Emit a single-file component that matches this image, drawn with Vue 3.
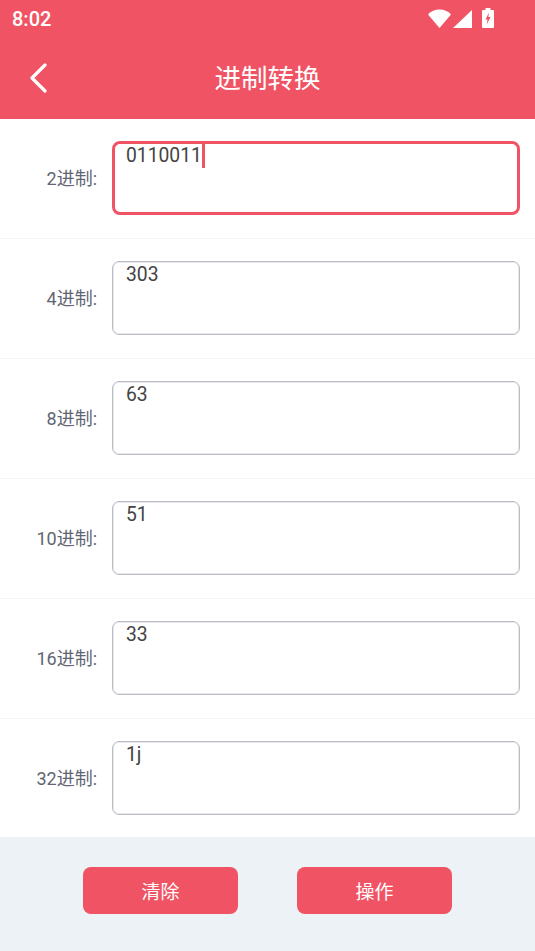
<script setup>
const rows = [
  { label: '2进制:', value: '0110011', active: true },
  { label: '4进制:', value: '303' },
  { label: '8进制:', value: '63' },
  { label: '10进制:', value: '51' },
  { label: '16进制:', value: '33' },
  { label: '32进制:', value: '1j' },
]
</script>

<template>
  <div class="page">
    <header class="head">
      <div class="status">
        <span class="time">8:02</span>
        <div class="icons">
          <svg class="wifi" width="23" height="19" viewBox="0 0 23 19"><path d="M0 5.500C3 2.200 7 .5 11.500 .5s8.500 1.700 11.500 5L11.500 19z" fill="#fff"/></svg>
          <svg class="signal" width="19" height="18" viewBox="0 0 19 18"><path d="M19 0v18H0z" fill="#fff"/></svg>
          <svg class="battery" width="12" height="20" viewBox="0 0 12 20"><path d="M3.500 0h5v2H11a1 1 0 0 1 1 1v16a1 1 0 0 1-1 1H1a1 1 0 0 1-1-1V3a1 1 0 0 1 1-1h2.500z" fill="#fff"/><path d="M7 4.500 3.500 11.500H5.500L4.800 16.500 8.500 9H6.300z" fill="#f05464"/></svg>
        </div>
      </div>
      <div class="bar">
        <svg class="back" width="18" height="30" viewBox="0 0 18 30"><path d="M16 2 3 15l13 13" fill="none" stroke="#fff" stroke-width="3.200" stroke-linecap="round" stroke-linejoin="round"/></svg>
        <h1 class="title">进制转换</h1>
      </div>
    </header>

    <main class="list">
      <div v-for="r in rows" :key="r.label" class="row">
        <span class="label">{{ r.label }}</span>
        <div class="box" :class="{ active: r.active }">
          <span class="val">{{ r.value }}</span><span v-if="r.active" class="caret"></span>
        </div>
      </div>
    </main>

    <footer class="foot">
      <button class="btn">清除</button>
      <button class="btn">操作</button>
    </footer>
  </div>
</template>

<style scoped>
.page {
  width: 535px;
  height: 951px;
  display: flex;
  flex-direction: column;
  background: #fff;
  font-family: Roboto, "Noto Sans CJK SC", sans-serif;
  overflow: hidden;
}
.head {
  height: 119px;
  flex: none;
  background: #f05464;
  color: #fff;
}
.status {
  height: 38px;
  display: flex;
  align-items: center;
  justify-content: space-between;
  padding: 0 41px 0 12px;
}
.time {
  font-size: 20px;
  font-weight: 500;
}
.icons {
  display: flex;
  align-items: flex-end;
  gap: 2px;
  height: 20px;
  margin-top: -2px;
}
.battery { margin-left: 8px; }
.bar {
  height: 81px;
  position: relative;
  display: flex;
  align-items: center;
  justify-content: center;
  box-sizing: border-box;
}
.back {
  position: absolute;
  left: 29px;
  top: 25px;
}
.title {
  margin: 0;
  font-size: 26.500px;
  font-weight: 400;
  line-height: 36px;
}
.list { flex: 1; }
.row {
  height: 120px;
  box-sizing: border-box;
  display: flex;
  align-items: center;
  padding: 22px 15px 23px 0;
  border-bottom: 1px solid #f1f3f6;
}
.row:last-child {
  height: 118px;
  padding-bottom: 22px;
  border-bottom: none;
}
.label {
  width: 97px;
  text-align: right;
  font-size: 18px;
  line-height: 24px;
  margin-top: 1px;
  color: #5f6672;
}
.box {
  margin-left: 15px;
  flex: 1;
  height: 74px;
  box-sizing: border-box;
  border: 1px solid #babdc3;
  box-shadow: inset 0 0 0 1px #e9eaed;
  border-radius: 7px;
  padding: 0 13px;
  font-size: 19.300px;
  line-height: 26px;
  color: #444;
  display: flex;
  align-items: flex-start;
}
.box.active {
  border: 3px solid #f05464;
  box-shadow: none;
  border-radius: 8px;
  padding: 0 11px;
  line-height: 24px;
}
.caret {
  width: 3px;
  height: 24px;
  background: #f05464;
}
.foot {
  height: 114px;
  flex: none;
  background: #edf2f7;
  display: flex;
  justify-content: center;
  align-items: flex-start;
  gap: 59px;
  padding-top: 30px;
  box-sizing: border-box;
}
.btn {
  width: 155px;
  height: 47px;
  border: none;
  border-radius: 8px;
  background: #f05464;
  color: #fff;
  font-family: inherit;
  font-size: 19px;
  padding: 0;
}
</style>
